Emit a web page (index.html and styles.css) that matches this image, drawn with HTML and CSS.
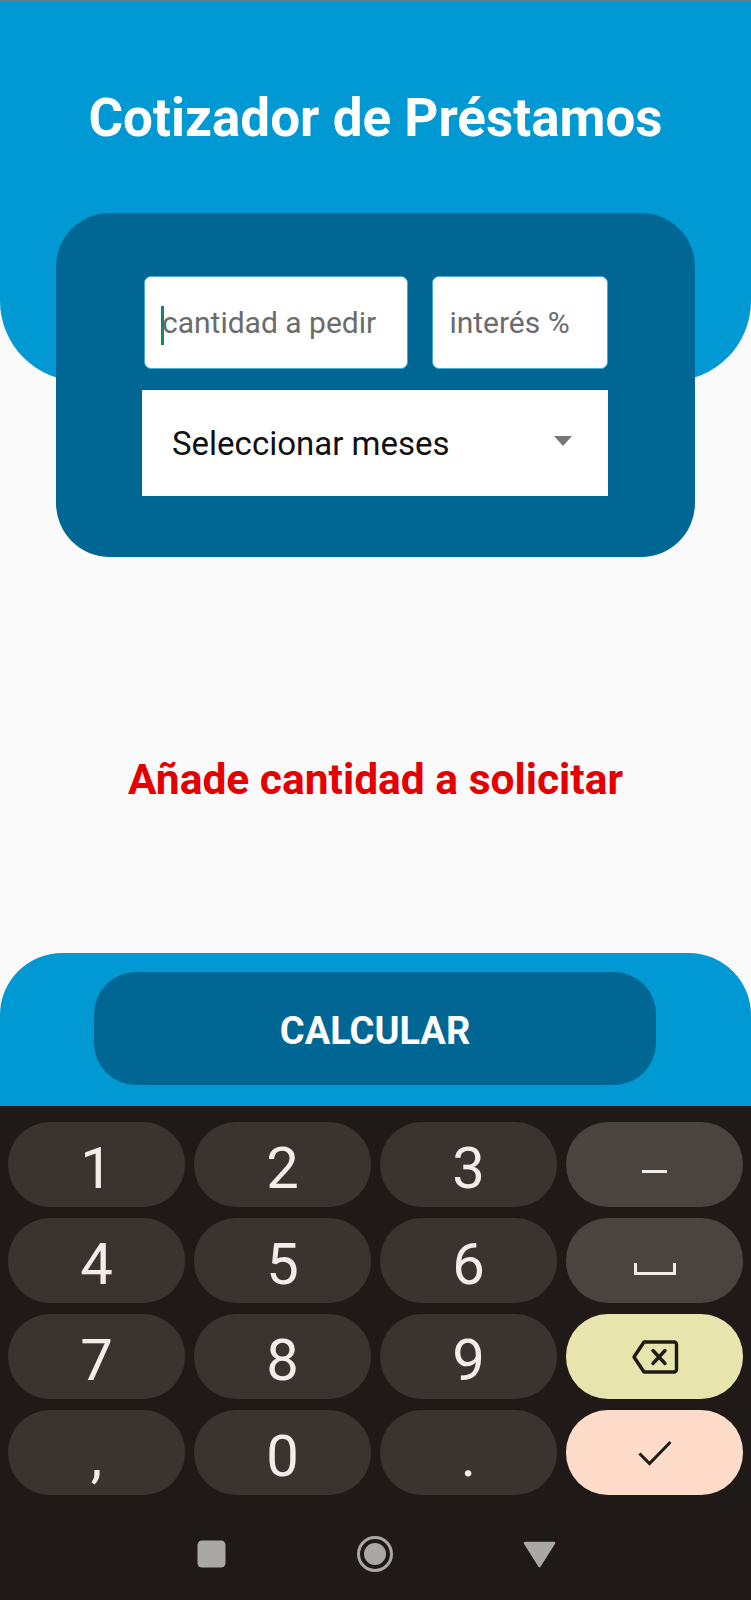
FILE: index.html
```html
<!DOCTYPE html>
<html lang="es">
<head>
<meta charset="utf-8">
<title>Cotizador de Préstamos</title>
<link rel="stylesheet" href="styles.css">
</head>
<body>
<div class="screen">
  <header class="header">
    <h1 class="title">Cotizador de Préstamos</h1>
  </header>

  <section class="card">
    <div class="row">
      <div class="field field-amount"><span class="cursor"></span><span class="placeholder">cantidad a pedir</span></div>
      <div class="field field-rate"><span class="placeholder">interés %</span></div>
    </div>
    <div class="select">
      <span class="select-text">Seleccionar meses</span>
      <span class="select-arrow"></span>
    </div>
  </section>

  <p class="error">Añade cantidad a solicitar</p>

  <section class="bottom">
    <div class="btn">CALCULAR</div>
  </section>

  <section class="keyboard">
    <div class="keys">
      <div class="key">1</div>
      <div class="key">2</div>
      <div class="key">3</div>
      <div class="key key-alt"><span class="dash"></span></div>
      <div class="key">4</div>
      <div class="key">5</div>
      <div class="key">6</div>
      <div class="key key-alt">
        <svg class="space-icon" width="42" height="12" viewBox="0 0 42 12"><path d="M1.5 0 V10.5 H40.5 V0" fill="none" stroke="#f3ebe7" stroke-width="3"/></svg>
      </div>
      <div class="key">7</div>
      <div class="key">8</div>
      <div class="key">9</div>
      <div class="key key-del">
        <svg width="48" height="36" viewBox="0 0 48 36"><path d="M3 18 L13 3 H43 A2.5 2.5 0 0 1 45.5 5.5 V30.5 A2.5 2.5 0 0 1 43 33 H13 Z" fill="none" stroke="#1e1b16" stroke-width="3.4" stroke-linejoin="round"/><path d="M22 11.5 L34 24.5 M34 11.5 L22 24.5" stroke="#1e1b16" stroke-width="3.4" stroke-linecap="round"/></svg>
      </div>
      <div class="key">,</div>
      <div class="key">0</div>
      <div class="key">.</div>
      <div class="key key-ok">
        <svg width="34" height="26" viewBox="0 0 34 26"><path d="M1.5 13.5 L11.5 23.5 L32.5 2" fill="none" stroke="#1e1b16" stroke-width="3"/></svg>
      </div>
    </div>
    <nav class="nav">
      <span class="nav-item"><svg width="29" height="28" viewBox="0 0 29 28"><rect x="0.5" y="0.5" width="28" height="27" rx="4.5" fill="#a9a8a7"/></svg></span>
      <span class="nav-item"><svg width="38" height="38" viewBox="0 0 38 38"><circle cx="19" cy="19" r="16.5" fill="none" stroke="#a9a8a7" stroke-width="3"/><circle cx="19" cy="19" r="11" fill="#a9a8a7"/></svg></span>
      <span class="nav-item"><svg width="33" height="27" viewBox="0 0 33 27"><path d="M2 2 H31 L16.5 25 Z" fill="#a9a8a7" stroke="#a9a8a7" stroke-width="2.5" stroke-linejoin="round"/></svg></span>
    </nav>
  </section>
</div>
</body>
</html>
```

FILE: styles.css
```css
* { box-sizing: border-box; }

html, body {
  margin: 0;
  padding: 0;
  background: #fafafa;
}

body {
  font-family: Roboto, "Liberation Sans", Arial, sans-serif;
}

.screen {
  width: 751px;
  height: 1600px;
  overflow: hidden;
  background: #fafafa;
}

.header {
  height: 381px;
  background: #0099d4;
  border-top: 2px solid #5f7f8e;
  border-radius: 0 0 80px 80px;
  padding-top: 90px;
}

.title {
  margin: 0;
  font-size: 53px;
  line-height: 53px;
  font-weight: 700;
  color: #ffffff;
  text-align: center;
}

.card {
  position: relative;
  margin: -168px 56px 0 56px;
  height: 344px;
  background: #006794;
  border-radius: 54px;
  padding: 63px 87px 0 86px;
}

.row {
  display: flex;
  gap: 24px;
  padding-left: 2px;
}

.field {
  height: 93px;
  background: #ffffff;
  border: 1.5px solid #4aaad0;
  border-radius: 7px;
  display: flex;
  align-items: center;
  font-size: 30px;
  color: #6b6b6b;
}

.field-amount {
  width: 265px;
  padding-left: 16px;
}

.field-rate {
  width: 176px;
  padding-left: 16px;
}

.cursor {
  width: 3px;
  height: 39px;
  background: #16866a;
  margin-right: -2px;
  margin-top: 6px;
}

.placeholder {
  white-space: nowrap;
}

.select {
  margin-top: 21px;
  height: 106px;
  width: 466px;
  background: #ffffff;
  display: flex;
  align-items: center;
  justify-content: space-between;
  padding: 0 36px 0 30px;
}

.select-text {
  font-size: 33px;
  color: #111111;
}

.select-arrow {
  width: 0;
  height: 0;
  border-left: 9.5px solid transparent;
  border-right: 9.5px solid transparent;
  border-top: 10px solid #777777;
  margin-top: -4px;
}

.error {
  margin: 198px 0 0 0;
  font-size: 42.5px;
  line-height: 49px;
  font-weight: 700;
  color: #e50000;
  text-align: center;
}

.bottom {
  margin-top: 149px;
  height: 153px;
  background: #0099d4;
  border-radius: 62px 62px 0 0;
  padding: 19px 95px 0 94px;
}

.btn {
  height: 113px;
  background: #006794;
  border-radius: 42px;
  display: flex;
  align-items: center;
  justify-content: center;
  font-size: 38px;
  font-weight: 700;
  color: #ffffff;
  padding-top: 5px;
}

.keyboard {
  height: 494px;
  background: #1f1a18;
  padding: 16px 9px 0 8px;
}

.keys {
  display: grid;
  grid-template-columns: repeat(4, 177px);
  grid-auto-rows: 85px;
  column-gap: 9px;
  row-gap: 11px;
}

.key {
  background: #3a3330;
  border-radius: 42px;
  display: flex;
  align-items: center;
  justify-content: center;
  font-size: 58px;
  font-weight: 400;
  color: #f5ece8;
  padding-top: 6px;
}

.key-alt {
  background: #4a4441;
  padding-top: 0;
}

.dash {
  width: 25px;
  height: 3px;
  background: #f3ebe7;
  margin-top: 14px;
}

.space-icon {
  margin-top: 16px;
}

.key-del {
  background: #e8e4ad;
  padding-top: 0;
}

.key-ok {
  background: #ffdcca;
  padding-top: 0;
}

.nav {
  margin-top: 40px;
  display: flex;
  justify-content: center;
  gap: 126px;
}

.nav-item {
  width: 38px;
  height: 38px;
  display: flex;
  align-items: center;
  justify-content: center;
}
```
